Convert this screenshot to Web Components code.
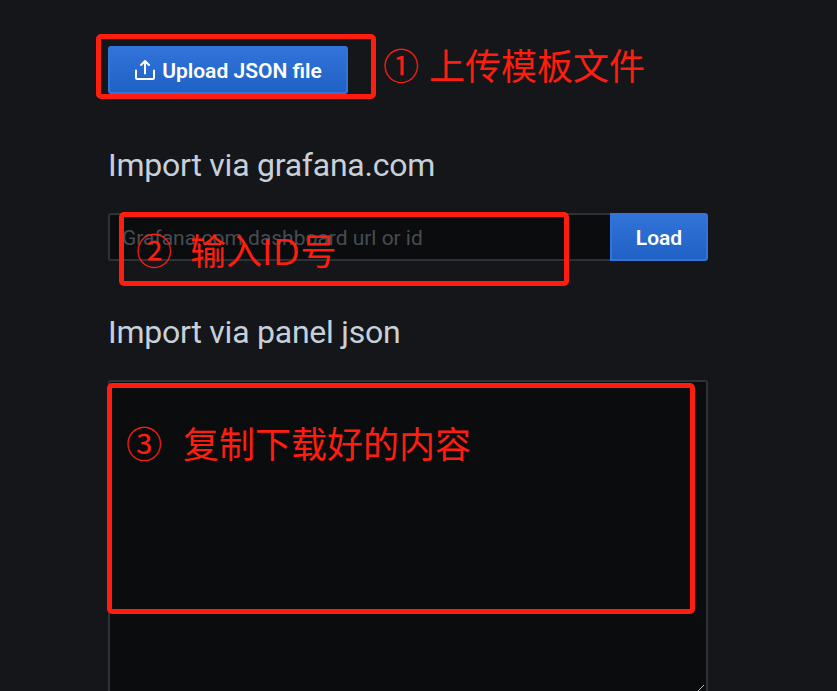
<!DOCTYPE html>
<html lang="zh">
<head>
<meta charset="utf-8">
<title>Import dashboard</title>
<style>
html,body{margin:0;height:100%;overflow:hidden;background:#15161a}
</style>
</head>
<body>
<import-page></import-page>
<script>
const define=(name,html)=>customElements.define(name,class extends HTMLElement{
  constructor(){super();this.attachShadow({mode:'open'}).innerHTML=html;}
});

define('blue-button',`<style>
:host{display:flex;align-items:center;justify-content:center;box-sizing:border-box;height:48px;border:2px solid #3274d9;border-radius:3px;background:linear-gradient(#3274d9,#1f60c4) border-box;color:#fff;font:600 21px/1 Roboto,sans-serif;white-space:nowrap}
span{padding-top:2px}
</style><slot name="icon"></slot><span><slot></slot></span>`);

define('upload-icon',`<style>:host{display:block;width:22px;height:22px;margin-right:6px}svg{display:block}</style>
<svg width="22" height="22" viewBox="0 0 22 22" fill="none" stroke="#fff" stroke-width="2" stroke-linecap="round" stroke-linejoin="round"><path d="M2 11.5V19Q2 20 3 20H19Q20 20 20 19V11.5M11 14.5V2M7 6L11 2L15 6"/></svg>`);

define('section-title',`<style>:host{display:block;height:40px;color:#c7d0d9;font:400 32px/40px Roboto,sans-serif;letter-spacing:-.24px;white-space:nowrap}</style><slot></slot>`);

define('url-field',`<style>
:host{display:block;box-sizing:border-box;flex:1;height:48px;border:2px solid #2c3235;border-right:0;border-radius:3px 0 0 3px;background:#0b0c0e;padding-left:12px;color:#464c54;font:400 21px/46px Roboto,sans-serif;letter-spacing:-.02px;white-space:nowrap}
</style><slot></slot>`);

define('json-area',`<style>
:host{display:flex;justify-content:flex-end;align-items:flex-end;box-sizing:border-box;height:311px;border:2px solid #2c3235;border-bottom:0;border-radius:3px 3px 0 0;background:#0b0c0e}
svg{display:block}
</style><svg width="8" height="8" viewBox="0 0 8 8" shape-rendering="crispEdges"><path d="M0 7h1v1H0zM1 6h1v1H1zM2 5h1v1H2zM3 4h1v1H3zM4 3h1v1H4zM5 2h1v1H5z" fill="#c0c0c0"/></svg>`);

define('red-frame',`<style>:host{position:absolute;box-sizing:border-box;border:5px solid #ff1d10;border-radius:5px}</style>`);

define('red-note',`<style>
:host{position:absolute;display:flex;color:#ff1d10;font:36px/50px "Noto Sans CJK SC",sans-serif;white-space:nowrap}
.n{width:var(--step,46px)}
::slotted(.latin){letter-spacing:.7px;font-family:"Open Sans","Noto Sans",sans-serif;font-size:37px;line-height:1}
</style><span class="n"><slot name="number"></slot></span><span><slot></slot></span>`);

define('import-page',`<style>
:host{display:block;position:relative;width:837px;height:691px;overflow:hidden;background:#15161a}
main{display:flex;flex-direction:column;width:600px;padding:46px 0 0 108px}
.upload{width:240px}
.t1{margin-top:51px}.row{display:flex;margin-top:28px}.load{width:98px;border-radius:0 3px 3px 0}
.t2{margin-top:51px}.area{margin-top:28px}
</style>
<main>
<blue-button class="upload"><upload-icon slot="icon"></upload-icon>Upload JSON file</blue-button>
<section-title class="t1">Import via grafana.com</section-title>
<div class="row"><url-field>Grafana.com dashboard url or id</url-field><blue-button class="load">Load</blue-button></div>
<section-title class="t2">Import via panel json</section-title>
<json-area class="area"></json-area>
</main>
<red-frame style="left:96px;top:34px;width:280px;height:65px"></red-frame>
<red-frame style="left:119px;top:212px;width:450px;height:74px"></red-frame>
<red-frame style="left:107px;top:383px;width:588px;height:231px"></red-frame>
<red-note style="left:383px;top:39px"><span slot="number">①</span>上传模板文件</red-note>
<red-note style="left:136px;top:224px;--step:54px"><span slot="number">②</span>输入<span class="latin">ID</span>号</red-note>
<red-note style="left:126px;top:417px;--step:57px"><span slot="number">③</span>复制下载好的内容</red-note>`);
</script>
</body>
</html>
